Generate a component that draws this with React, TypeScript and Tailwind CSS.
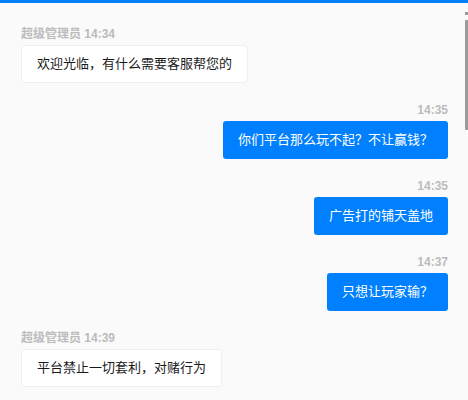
import React from "react";

type Msg = { side: "left" | "right"; label: string; text: string };

const msgs: Msg[] = [
  { side: "left", label: "超级管理员 14:34", text: "欢迎光临，有什么需要客服帮您的" },
  { side: "right", label: "14:35", text: "你们平台那么玩不起？不让赢钱？" },
  { side: "right", label: "14:35", text: "广告打的铺天盖地" },
  { side: "right", label: "14:37", text: "只想让玩家输？" },
  { side: "left", label: "超级管理员 14:39", text: "平台禁止一切套利，对赌行为" },
];

export default function App() {
  return (
    <div
      className="relative w-[468px] h-[400px] overflow-hidden bg-[#fafafa]"
      style={{ fontFamily: '"Liberation Sans", "Noto Sans CJK SC", sans-serif' }}
    >
      <div className="h-[3px] bg-[#0080ff]" />
      <div className="flex flex-col pt-[23px] pl-[21px] pr-[20px]">
        {msgs.map((m, i) => (
          <div
            key={i}
            className={
              m.side === "left"
                ? "flex flex-col items-start mb-[19px]"
                : "flex flex-col items-end mb-[19px]"
            }
          >
            <div className="h-[16px] leading-[16px] text-[12px] font-bold text-[#bcbcbc]">
              {m.label}
            </div>
            <div
              className={
                m.side === "left"
                  ? "mt-[3px] h-[38px] flex items-center px-[15px] rounded-[3px] bg-white border border-[#efefef] text-[13px] text-[#1a1a1a]"
                  : "mt-[3px] h-[38px] flex items-center px-[15px] rounded-[3px] bg-[#0080ff] text-[13px] text-white"
              }
            >
              {m.text}
            </div>
          </div>
        ))}
      </div>
      <div className="absolute right-0 top-[12px] w-[3px] h-[3px] bg-[#9a9a9a]" />
      <div className="absolute right-0 top-[20px] w-[3px] h-[110px] rounded-l-[1px] bg-[#9a9a9a]" />
    </div>
  );
}
